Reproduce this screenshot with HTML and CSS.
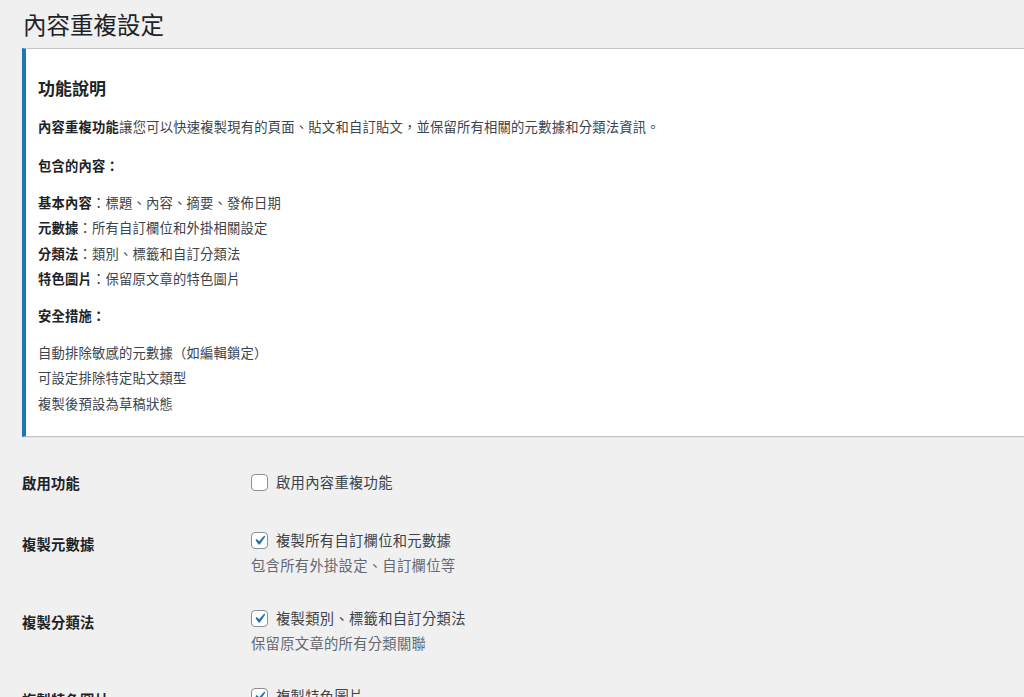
FILE: index.html
```html
<!DOCTYPE html>
<html lang="zh-Hant">
<head>
<meta charset="utf-8">
<title>內容重複設定</title>
<link rel="stylesheet" href="styles.css">
</head>
<body>
<div class="wrap">
  <h1 class="page-title">內容重複設定</h1>

  <div class="notice">
    <h2 class="notice-title">功能說明</h2>
    <p class="notice-p"><strong>內容重複功能</strong>讓您可以快速複製現有的頁面、貼文和自訂貼文，並保留所有相關的元數據和分類法資訊。</p>
    <p class="notice-p notice-head"><strong>包含的內容：</strong></p>
    <ul class="notice-list">
      <li><strong>基本內容</strong>：標題、內容、摘要、發佈日期</li>
      <li><strong>元數據</strong>：所有自訂欄位和外掛相關設定</li>
      <li><strong>分類法</strong>：類別、標籤和自訂分類法</li>
      <li><strong>特色圖片</strong>：保留原文章的特色圖片</li>
    </ul>
    <p class="notice-p notice-head2"><strong>安全措施：</strong></p>
    <ul class="notice-list">
      <li>自動排除敏感的元數據（如編輯鎖定）</li>
      <li>可設定排除特定貼文類型</li>
      <li>複製後預設為草稿狀態</li>
    </ul>
  </div>

  <table class="form-table">
    <tbody>
      <tr class="row-1">
        <th>啟用功能</th>
        <td>
          <label class="cb-line"><span class="cb"></span>啟用內容重複功能</label>
        </td>
      </tr>
      <tr>
        <th>複製元數據</th>
        <td>
          <label class="cb-line"><span class="cb checked"><svg viewBox="0 0 20 20" width="20" height="20"><path d="M14.83 4.89l1.34.94-5.81 8.38H9.02L5.78 9.67l1.34-1.25 2.57 2.4z"/></svg></span>複製所有自訂欄位和元數據</label>
          <p class="description">包含所有外掛設定、自訂欄位等</p>
        </td>
      </tr>
      <tr>
        <th>複製分類法</th>
        <td>
          <label class="cb-line"><span class="cb checked"><svg viewBox="0 0 20 20" width="20" height="20"><path d="M14.83 4.89l1.34.94-5.81 8.38H9.02L5.78 9.67l1.34-1.25 2.57 2.4z"/></svg></span>複製類別、標籤和自訂分類法</label>
          <p class="description">保留原文章的所有分類關聯</p>
        </td>
      </tr>
      <tr>
        <th>複製特色圖片</th>
        <td>
          <label class="cb-line"><span class="cb checked"><svg viewBox="0 0 20 20" width="20" height="20"><path d="M14.83 4.89l1.34.94-5.81 8.38H9.02L5.78 9.67l1.34-1.25 2.57 2.4z"/></svg></span>複製特色圖片</label>
          <p class="description">保留原文章的特色圖片</p>
        </td>
      </tr>
    </tbody>
  </table>
</div>
</body>
</html>
```

FILE: styles.css
```css
html, body {
  margin: 0;
  padding: 0;
  overflow: hidden;
  background: #f0f0f1;
}

body {
  font-family: "Noto Sans CJK TC", "Noto Sans", sans-serif;
  color: #3c434a;
}

.wrap {
  margin: 0 -40px 0 22px;
}

.page-title {
  margin: 0;
  padding: 9px 0 0 1px;
  height: 39px;
  font-size: 23.5px;
  line-height: 30px;
  font-weight: 400;
  color: #1d2327;
}

.notice {
  background: #fff;
  border: 1px solid #c3c4c7;
  border-left: 4px solid #1e77ae;
  padding: 0 12px 20px 12px;
  box-shadow: 0 1px 1px rgba(0, 0, 0, 0.04);
}

.notice-title {
  margin: 28px 0 0;
  font-size: 17px;
  line-height: 22px;
  font-weight: 700;
  color: #1d2327;
}

.notice-p {
  margin: 18px 0 0;
  font-size: 13.3px;
  line-height: 20px;
  letter-spacing: 0.22px;
}

.notice-p strong,
.notice-list strong {
  color: #1d2327;
  font-weight: 700;
}

.notice-head {
  margin-top: 19px;
}

.notice-head2 {
  margin-top: 15px;
}

.notice-list {
  list-style: none;
  margin: 14px 0 0;
  padding: 0;
  font-size: 13.3px;
  line-height: 25.3px;
  letter-spacing: 0.2px;
}

.form-table {
  border-collapse: collapse;
  margin-top: 15px;
  width: 100%;
}

.form-table th {
  width: 209px;
  padding: 20px 10px 20px 0;
  text-align: left;
  vertical-align: top;
  font-size: 14.3px;
  line-height: 21px;
  font-weight: 700;
  color: #1d2327;
  letter-spacing: 0.2px;
}

.form-table td {
  padding: 15px 10px 16px;
  vertical-align: middle;
  font-size: 14.3px;
  letter-spacing: 0.3px;
}

.cb-line {
  display: flex;
  align-items: center;
  height: 24px;
  line-height: 24px;
  color: #3c434a;
}

.cb {
  box-sizing: border-box;
  width: 17px;
  height: 17px;
  margin-right: 8px;
  border: 1px solid #8c8f94;
  border-radius: 4px;
  background: #fff;
  display: flex;
  align-items: center;
  justify-content: center;
  flex: none;
}

.cb svg {
  width: 19px;
  height: 19px;
  fill: #2271b1;
  flex: none;
}

.description {
  margin: 3px 0 0;
  font-size: 14.3px;
  line-height: 20px;
  color: #646970;
}
```
